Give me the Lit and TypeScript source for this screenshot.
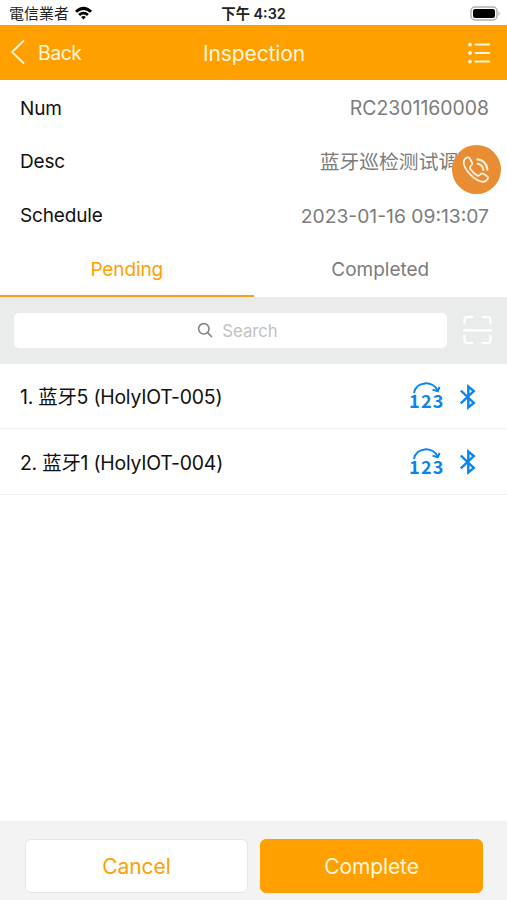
import { LitElement, html, css, svg } from "lit";
import { customElement, property } from "lit/decorators.js";

const pairs = [
  { label: "Num", value: "RC2301160008", cls: "num" },
  { label: "Desc", value: "蓝牙巡检测试调试", cls: "cjk" },
  { label: "Schedule", value: "2023-01-16 09:13:07", cls: "date" },
];

const devices = ["1. 蓝牙5 (HolyIOT-005)", "2. 蓝牙1 (HolyIOT-004)"];

const wifi = svg`
  <path d="M1 4.7 Q9.5 -3 18 4.7 L16 6.8 Q9.5 1.2 3 6.8Z" />
  <path d="M4.1 8 Q9.5 3.4 14.9 8 L12.9 10 Q9.5 7.2 6.1 10Z" />
  <path d="M7.1 11 Q9.5 9.1 11.9 11 L9.5 13.4Z" />`;

@customElement("device-row")
export class DeviceRow extends LitElement {
  @property() name = "";

  static styles = css`
    :host {
      display: flex;
      align-items: center;
      box-sizing: border-box;
      height: 65.5px;
      padding: 2px 30px 0 20px;
      border-bottom: 1px solid #f2f2f2;
      color: #111;
      font-size: 19.4px;
    }
    .name {
      flex: 1;
      padding-top: 1px;
      white-space: pre;
      letter-spacing: -0.22px;
    }
    .count {
      width: 38px;
      height: 32px;
      margin-right: 12px;
    }
    .digits {
      font: 700 18px "Noto Sans CJK SC", sans-serif;
      letter-spacing: 1.3px;
    }
    .bt {
      width: 18px;
      height: 28px;
      margin-top: -1px;
    }
  `;

  render() {
    return html`
      <span class="name">${this.name}</span>
      <svg class="count" viewBox="0 0 38 32" fill="none" stroke="#0a84f0">
        <path d="M5 12C7 0 24 -0.8 28.6 9.5" stroke-width="2" />
        <path d="M23.5 8.6L28.8 10.2L30.6 5.8" stroke-width="2" />
        <text class="digits" x="0" y="27" fill="#0a84f0" stroke="none">123</text>
      </svg>
      <svg class="bt" viewBox="0 0 18 28" fill="none" stroke="#0a84f0" stroke-width="2.4">
        <path d="M1.8 7.5L14.8 20L9.3 24.5V3.5L14.8 8L1.8 20.3" />
      </svg>
    `;
  }
}

@customElement("app-root")
export class AppRoot extends LitElement {
  static styles = css`
    :host {
      display: flex;
      flex-direction: column;
      position: relative;
      height: 900px;
      overflow: hidden;
      background: #fff;
      font-family: Inter, "Noto Sans CJK SC", sans-serif;
      font-size: 19px;
      line-height: 1.2;
    }
    .status {
      display: grid;
      grid-template-columns: 1fr auto 1fr;
      align-items: center;
      height: 25px;
      padding: 2px 6px 0 9px;
      box-sizing: border-box;
      color: #222;
      font-family: Inter, "Noto Sans CJK TC", sans-serif;
      font-size: 14.5px;
    }
    .carrier {
      display: flex;
      align-items: center;
      gap: 5px;
      font-size: 15px;
    }
    .wifi {
      width: 19px;
      height: 14px;
      margin-top: -2px;
      fill: #000;
    }
    .time {
      margin-left: -3px;
      font-weight: 600;
      font-size: 14.3px;
    }
    .battery {
      justify-self: end;
      width: 31px;
      height: 15px;
    }
    .header {
      display: grid;
      grid-template-columns: 1fr auto 1fr;
      align-items: center;
      height: 55px;
      padding: 1px 16px 0 10px;
      box-sizing: border-box;
      background: #ffa000;
      color: #fff6dc;
    }
    .back {
      display: flex;
      align-items: center;
      gap: 12px;
      font-size: 19.5px;
      letter-spacing: -0.5px;
    }
    .back span {
      padding-top: 2px;
    }
    .chevron {
      width: 16px;
      height: 26px;
      margin-top: -1px;
    }
    .title {
      margin-left: 7px;
      padding-top: 1px;
      font-size: 21px;
      letter-spacing: -0.1px;
    }
    .menu {
      justify-self: end;
      width: 24px;
      height: 24px;
    }
    .pair {
      display: flex;
      align-items: center;
      justify-content: space-between;
      box-sizing: border-box;
      height: 53.8px;
      padding: 4px 18px 0 20px;
      color: #111;
    }
    .label {
      letter-spacing: -0.15px;
    }
    .value {
      color: #7c7c7c;
    }
    .num {
      font-size: 19.4px;
    }
    .date {
      font-size: 19.3px;
    }
    .cjk {
      font-size: 19.8px;
      margin-right: 11px;
    }
    .call {
      position: absolute;
      left: 452px;
      top: 145px;
      width: 49px;
      height: 49px;
    }
    .tabs {
      display: grid;
      grid-template-columns: 1fr 1fr;
      height: 55.6px;
      color: #7c7c7c;
      text-align: center;
    }
    .tab {
      box-sizing: border-box;
      padding-top: 18px;
    }
    .on {
      color: #ffa000;
      border-bottom: 2.5px solid #f9a01b;
      letter-spacing: -0.1px;
    }
    .find {
      display: flex;
      align-items: center;
      gap: 15px;
      height: 67px;
      padding: 0 14px;
      box-sizing: border-box;
      background: #eaecec;
    }
    .field {
      flex: 1;
      display: flex;
      align-items: center;
      justify-content: center;
      gap: 9px;
      height: 35px;
      padding-left: 14px;
      box-sizing: border-box;
      border-radius: 5px;
      background: #fff;
      color: #c2c2c2;
      font-size: 16.7px;
    }
    .field span {
      padding-top: 1px;
    }
    .lens {
      width: 16px;
      height: 16px;
    }
    .scan {
      width: 31px;
      height: 30px;
    }
    .list {
      flex: 1;
    }
    .footer {
      display: grid;
      grid-template-columns: 1fr 1fr;
      gap: 12px;
      height: 79px;
      padding: 18px 24px 7px 25px;
      box-sizing: border-box;
      background: #f3f3f3;
    }
    .btn {
      border: 1px solid #e6e6e6;
      border-radius: 6px;
      background: #fff;
      color: #ffa000;
      font-family: inherit;
      font-size: 21px;
      letter-spacing: -0.1px;
      padding: 1px 0 0;
    }
    .primary {
      border-color: #ffa000;
      background: #ffa000;
      color: #fff6dc;
    }
  `;

  render() {
    return html`
      <div class="status">
        <div class="carrier">
          <span>電信業者</span>
          <svg class="wifi" viewBox="0 0 19 14">${wifi}</svg>
        </div>
        <span class="time">下午 4:32</span>
        <svg class="battery" viewBox="0 0 31 15">
          <rect x="1" y="1" width="26" height="13" rx="4" fill="#fff" stroke="#b0b0b0" stroke-width="1.4" />
          <rect x="3" y="3" width="22" height="9" rx="2" fill="#000" />
          <path d="M28.5 5Q31 7.5 28.5 10Z" fill="#b0b0b0" />
        </svg>
      </div>
      <div class="header">
        <div class="back">
          <svg class="chevron" viewBox="0 0 16 26" fill="none" stroke="#fff6dc" stroke-width="1.8">
            <path d="M14 1.5L2 13L14 24.5" />
          </svg>
          <span>Back</span>
        </div>
        <span class="title">Inspection</span>
        <svg class="menu" viewBox="0 0 24 24" fill="#fff6dc" stroke="#fff6dc">
          <path d="M7.5 3.5H23M7.5 12H23M7.5 20.5H23" stroke-width="2" />
          <circle cx="3" cy="3.5" r="1.5" />
          <circle cx="3" cy="12" r="1.5" />
          <circle cx="3" cy="20.5" r="1.5" />
        </svg>
      </div>
      ${pairs.map(
        (p) => html`<div class="pair">
          <span class="label">${p.label}</span><span class="value ${p.cls}">${p.value}</span>
        </div>`
      )}
      <div class="tabs">
        <div class="tab on">Pending</div>
        <div class="tab">Completed</div>
      </div>
      <div class="find">
        <div class="field">
          <svg class="lens" viewBox="0 0 16 16" fill="none" stroke="#858585" stroke-width="1.6">
            <circle cx="6.8" cy="6.8" r="5.2" />
            <path d="M10.6 10.6L15 15" />
          </svg>
          <span>Search</span>
        </div>
        <svg class="scan" viewBox="0 0 31 30" fill="none" stroke="#fff" stroke-width="2.2">
          <path d="M2.5 9.5V5Q2.5 2 5.5 2H11M20 2H25.5Q28.5 2 28.5 5V9.5M2.5 20V25Q2.5 28 5.5 28H11M20 28H25.5Q28.5 28 28.5 25V20M1 15.3H30" />
        </svg>
      </div>
      <div class="list">
        ${devices.map((d) => html`<device-row .name=${d}></device-row>`)}
      </div>
      <div class="footer">
        <button class="btn">Cancel</button>
        <button class="btn primary">Complete</button>
      </div>
      <svg class="call" viewBox="0 0 49 49" fill="none" stroke="#fff1dc" stroke-width="1.8" stroke-linejoin="round" stroke-linecap="round">
        <circle cx="24.5" cy="24.5" r="24.5" fill="#e88d33" stroke="none" />
        <path d="M13.2 13.6L15.4 12.4Q17 12 17.8 13.4L20 17.6Q20.8 19.2 19.4 20.4L18.2 21.6Q17.6 22.6 18.4 24Q21.4 28.6 25.6 30.6Q26.8 31 27.6 30.2L29 28.9Q30 28.1 31.4 28.8L35.2 31.2Q36.6 32.2 35.8 33.6Q34.2 36.8 31 36.8Q25.2 36.4 18.4 29.6Q11.8 22.2 11.7 17.4Q11.8 14.8 13.2 13.6Z" />
        <path d="M25.4 14.4Q34.2 15.2 35.4 24.6" stroke-width="2.1" />
        <path d="M25.6 18.8Q30.6 19.6 31.4 25" stroke-width="2.1" />
      </svg>
    `;
  }
}
